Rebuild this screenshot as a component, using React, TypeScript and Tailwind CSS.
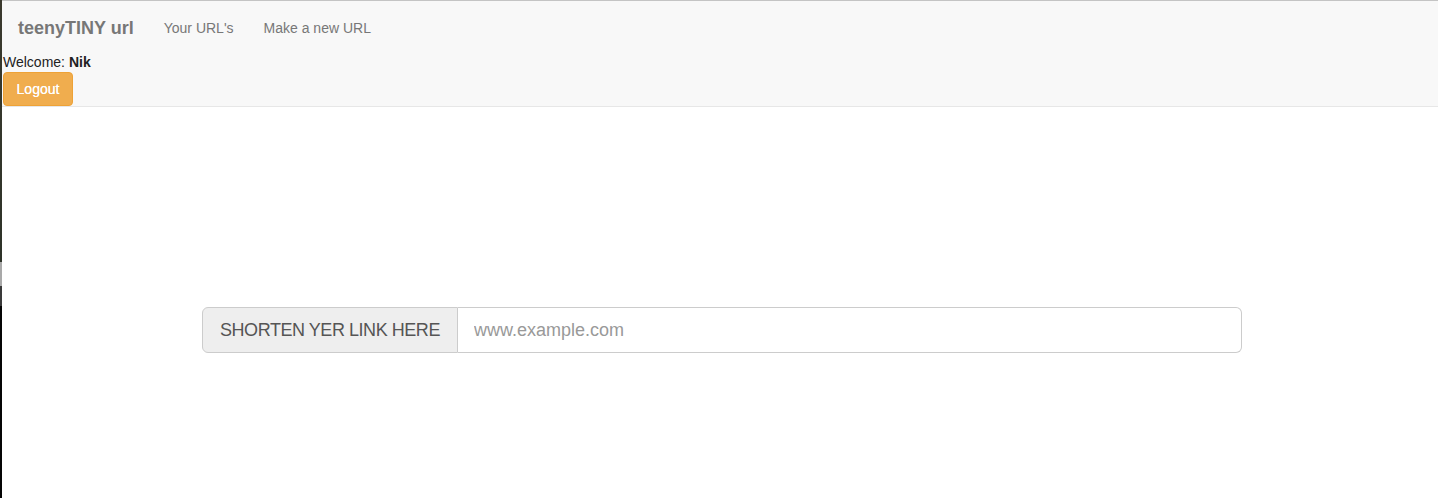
import React from "react";

export default function App() {
  return (
    <div className="flex h-[498px] w-[1438px] overflow-hidden bg-white" style={{ fontFamily: '"Liberation Sans", Arial, sans-serif' }}>
      <div className="flex w-[2px] shrink-0 flex-col">
        <div className="h-[262px] bg-gradient-to-b from-[#3b3a2e] to-[#2e3329]"></div>
        <div className="h-[24px] bg-[#a9a9a9]"></div>
        <div className="h-[20px] bg-[#3a3a3a]"></div>
        <div className="flex-1 bg-[#050505]"></div>
      </div>
      <div className="flex min-w-0 flex-1 flex-col">
        <div className="h-[1px] bg-[#c4c4c4]"></div>
        <nav className="border-b border-[#e7e7e7] bg-[#f8f8f8] pl-[1px]">
          <div className="flex h-[52px] items-center pt-[1px]">
            <span className="px-[15px] text-[18px] font-bold leading-[20px] text-[#777]">teenyTINY url</span>
            <span className="px-[15px] text-[14px] leading-[20px] text-[#777]">Your URL's</span>
            <span className="px-[15px] text-[14px] leading-[20px] text-[#777]">Make a new URL</span>
          </div>
          <div className="text-[14px] leading-[18px] text-[#222]">
            Welcome: <b>Nik</b>
          </div>
          <button className="mt-[1px] h-[34px] w-[70px] rounded-[4px] border border-[#eea236] bg-[#f0ad4e] text-[14px] leading-[20px] text-white [text-shadow:0_0_0.4px_#fff]">
            Logout
          </button>
        </nav>
        <div className="pl-[200px] pt-[200px]">
          <div className="flex h-[46px] w-[1040px]">
            <div className="flex w-[256px] items-center justify-center rounded-l-[6px] border border-[#ccc] bg-[#eee] text-[18px] tracking-[-0.45px] text-[#555]">
              SHORTEN YER LINK HERE
            </div>
            <input
              className="flex-1 rounded-r-[6px] border border-l-0 border-[#ccc] bg-white px-[16px] text-[18px] text-[#555] placeholder:text-[#999] outline-none"
              placeholder="www.example.com"
            />
          </div>
        </div>
      </div>
    </div>
  );
}
